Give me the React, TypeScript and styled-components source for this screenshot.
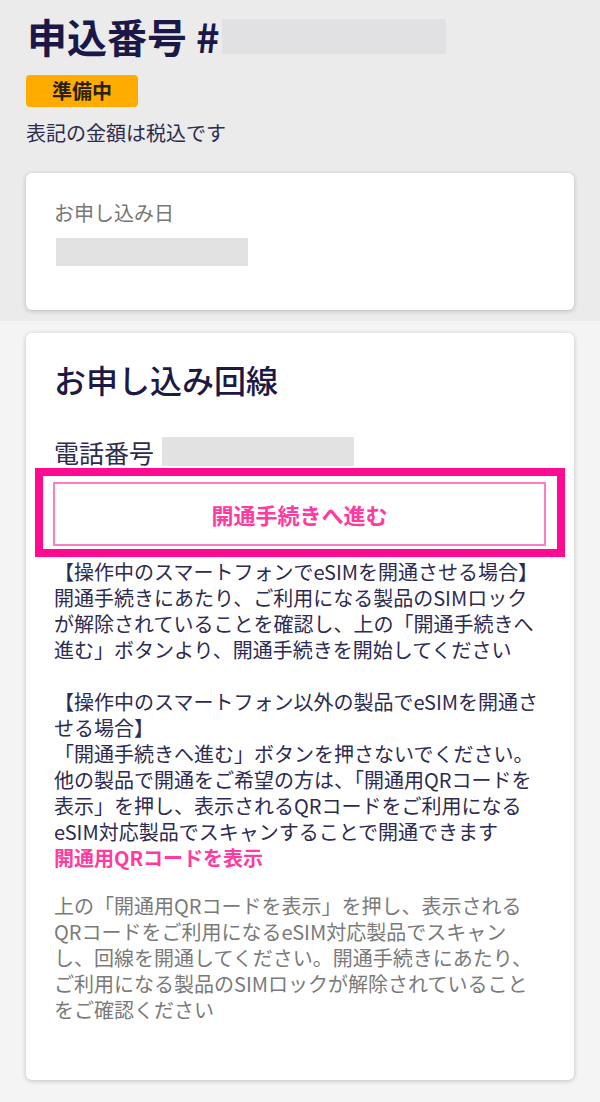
import React from 'react'
import styled, { createGlobalStyle } from 'styled-components'

const GlobalStyle = createGlobalStyle`
  html, body {
    margin: 0;
    padding: 0;
    background: #f4f4f4;
  }
  body {
    font-family: "Noto Sans CJK JP", "Noto Sans", sans-serif;
    color: #2d2b4f;
  }
`

const line1 = [
    '【操作中のスマートフォンでeSIMを開通させる場合】',
    '開通手続きにあたり、ご利用になる製品のSIMロック',
    'が解除されていることを確認し、上の「開通手続きへ',
    '進む」ボタンより、開通手続きを開始してください',
]

const line2 = [
    '【操作中のスマートフォン以外の製品でeSIMを開通さ',
    'せる場合】',
    '「開通手続きへ進む」ボタンを押さないでください。',
    '他の製品で開通をご希望の方は、「開通用QRコードを',
    '表示」を押し、表示されるQRコードをご利用になる',
    'eSIM対応製品でスキャンすることで開通できます',
]

const note = [
    '上の「開通用QRコードを表示」を押し、表示される',
    'QRコードをご利用になるeSIM対応製品でスキャン',
    'し、回線を開通してください。開通手続きにあたり、',
    'ご利用になる製品のSIMロックが解除されていること',
    'をご確認ください',
]

// one block per line so the wrapping matches the screenshot exactly
const asLines = (lines: string[]) => lines.map((l, i) => <Line key={i}>{l}</Line>)

export default function App() {
    return (
        <>
            <GlobalStyle />
            <Page>
                <TopSection>
                    <Heading>
                        申込番号 #<Mask w={224} h={35} tone="#e1e1e3" />
                    </Heading>
                    <Badge>準備中</Badge>
                    <TaxNote>表記の金額は税込です</TaxNote>
                    <Card pad="27px 28px 44px">
                        <Label>お申し込み日</Label>
                        <Mask w={192} h={28} tone="#e2e2e2" top={12} />
                    </Card>
                </TopSection>
                <BottomSection>
                    <Card pad="26px 26px 57px 28px">
                        <CardTitle>お申し込み回線</CardTitle>
                        <PhoneRow>
                            電話番号
                            <Mask w={192} h={29} tone="#e2e2e2" />
                        </PhoneRow>
                        <Highlight>
                            <ActivateButton>開通手続きへ進む</ActivateButton>
                        </Highlight>
                        <Body>
                            <Para>{asLines(line1)}</Para>
                            <Para>{asLines(line2)}</Para>
                            <LinkText>開通用QRコードを表示</LinkText>
                        </Body>
                        <Muted>{asLines(note)}</Muted>
                    </Card>
                </BottomSection>
            </Page>
        </>
    )
}

const Page = styled.div`
    width: 600px;
    min-height: 1102px;
    display: flex;
    flex-direction: column;
    background: #f4f4f4;
`

const TopSection = styled.section`
    background: #ebebeb;
    padding: 12px 26px 11px;
`

const BottomSection = styled.section`
    flex: 1;
    padding: 12px 26px 20px;
`

const Heading = styled.h1`
    margin: 0 0 0 1px;
    display: flex;
    align-items: center;
    font-size: 40px;
    line-height: 48px;
    font-weight: 700;
    color: #1b1747;
`

const Mask = styled.span<{ w: number; h: number; tone: string; top?: number }>`
    display: block;
    width: ${p => p.w}px;
    height: ${p => p.h}px;
    margin-top: ${p => p.top || 0}px;
    margin-left: 2px;
    background: ${p => p.tone};
    flex-shrink: 0;
`

const Badge = styled.div`
    display: inline-block;
    margin-top: 15px;
    padding: 0 26px;
    height: 32px;
    line-height: 32px;
    font-size: 20px;
    font-weight: 700;
    color: #2a2110;
    background: #ffab00;
    border-radius: 4px;
`

const TaxNote = styled.p`
    margin: 13px 0 27px;
    font-size: 20px;
    line-height: 26px;
    color: #2d2b4f;
`

const Card = styled.div<{ pad: string }>`
    background: #fff;
    border-radius: 6px;
    box-shadow: 0 1px 5px rgba(0, 0, 0, 0.22);
    padding: ${p => p.pad};
`

const Label = styled.div`
    font-size: 20px;
    line-height: 26px;
    color: #777;
`

const CardTitle = styled.h2`
    margin: 0;
    font-size: 32px;
    line-height: 40px;
    font-weight: 500;
    color: #1c1a44;
`

const PhoneRow = styled.div`
    margin-top: 38px;
    display: flex;
    align-items: center;
    height: 29px;
    font-size: 25px;
    color: #2d2b4f;
    & > span {
        margin-left: 8px;
    }
`

const Highlight = styled.div`
    margin: 2px -17px 0 -19px;
    border: 8px solid #ff0a91;
    padding: 6px 11px 3px 10px;
`

const ActivateButton = styled.button`
    display: block;
    width: 100%;
    height: 64px;
    background: #fff;
    border: 2px solid #ff7cc4;
    font-family: "Noto Sans CJK JP", "Noto Sans", sans-serif;
    font-size: 22px;
    font-weight: 700;
    color: #ff3aa0;
    cursor: pointer;
`

const Body = styled.div`
    margin-top: 2px;
    font-size: 20px;
    color: #2d2b4f;
`

const Line = styled.span`
    display: block;
    height: 26px;
    line-height: 26px;
    white-space: nowrap;
`

const Para = styled.p`
    margin: 0 0 26px;
    &:last-of-type {
        margin-bottom: 0;
    }
`

const LinkText = styled.a`
    display: block;
    line-height: 26px;
    font-weight: 700;
    color: #ff3aa0;
    cursor: pointer;
`

const Muted = styled.div`
    margin: 22px 0 0;
    font-size: 20px;
    color: #7a7a7a;
`
